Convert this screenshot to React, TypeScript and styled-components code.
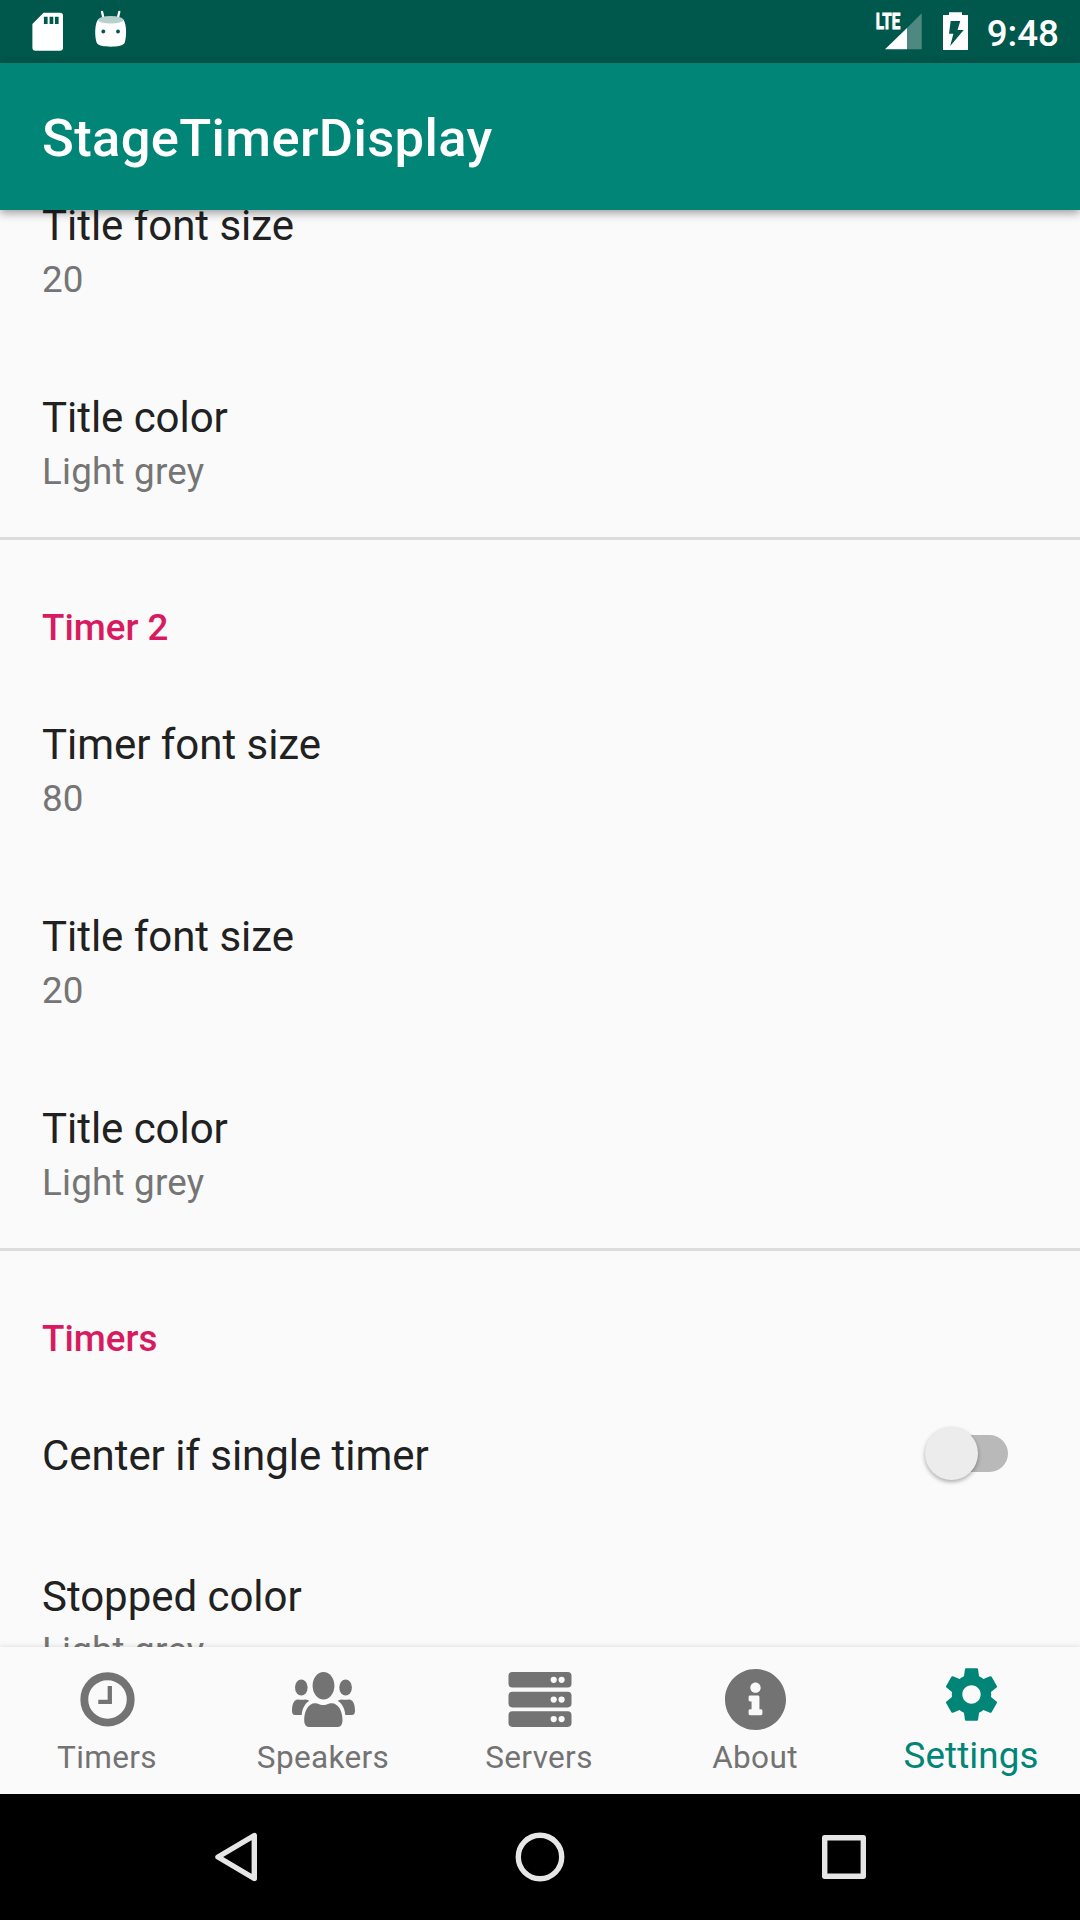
import React from "react";
import styled, { createGlobalStyle } from "styled-components";
import { FaInfoCircle } from "react-icons/fa";

const teal = "#008577";

const GlobalStyle = createGlobalStyle`
  html, body { margin: 0; padding: 0; }
  body { background: #fafafa; font-family: Roboto, "Noto Sans", sans-serif; overflow: hidden; }
  *, *::before, *::after { box-sizing: border-box; }
`;

const Screen = styled.div`
  width: 1080px;
  height: 1920px;
  display: flex;
  flex-direction: column;
  background: #fafafa;
  overflow: hidden;
`;

const StatusBar = styled.header`
  height: 63px;
  flex: none;
  display: flex;
  justify-content: space-between;
  padding: 0 21px 0 28px;
  background: #00574b;
  color: #fff;
`;

const StatusGroup = styled.div`
  display: flex;
  gap: 20px;
`;

const Clock = styled.time`
  font-size: 36.75px;
  font-weight: 500;
  line-height: 43px;
  padding-top: 12px;
  margin-left: -1px;
`;

const AppBar = styled.div`
  height: 147px;
  flex: none;
  display: flex;
  align-items: center;
  padding: 3px 42px 0;
  background: ${teal};
  color: #fff;
  box-shadow: 0 3px 9px rgba(0, 0, 0, 0.38);
  z-index: 2;
`;

const AppTitle = styled.h1`
  margin: 0;
  font-size: 52.5px;
  line-height: 62px;
  font-weight: 500;
  letter-spacing: 0.36px;
`;

const Preferences = styled.main`
  flex: 1;
  min-height: 0;
  display: flex;
  flex-direction: column;
  justify-content: flex-start;
  overflow: hidden;
`;

const Scrolled = styled.div`
  margin-top: -57px;
  display: flex;
  flex-direction: column;
`;

const Group = styled.section`
  display: flex;
  flex-direction: column;
  & + & {
    border-top: 3px solid #dcdcdc;
  }
`;

const GroupTitle = styled.h2`
  margin: 0;
  height: 132px;
  padding: 66px 42px 0;
  font-size: 36.75px;
  line-height: 43px;
  font-weight: 500;
  color: #d81b60;
`;

const Row = styled.div<{ $single?: boolean }>`
  height: ${(p) => (p.$single ? 141 : 192)}px;
  display: flex;
  justify-content: space-between;
  padding: 48px 72px 0 42px;
`;

const RowText = styled.div`
  display: flex;
  flex-direction: column;
  gap: 8px;
`;

const RowTitle = styled.span`
  font-size: 42px;
  line-height: 49px;
  letter-spacing: -0.04px;
  color: #212121;
`;

const Summary = styled.span`
  font-size: 36.75px;
  line-height: 43px;
  letter-spacing: 0.22px;
  color: #757575;
`;

const Track = styled.div`
  width: 80px;
  height: 37px;
  margin-top: 4px;
  border-radius: 19px;
  background: #b9b9b9;
  display: flex;
  align-items: center;
`;

const Thumb = styled.div`
  width: 53px;
  height: 53px;
  flex: none;
  margin-left: -3px;
  border-radius: 50%;
  background: #ececec;
  box-shadow: 0 2px 4px rgba(0, 0, 0, 0.32);
`;

const Tabs = styled.nav`
  height: 147px;
  flex: none;
  display: grid;
  grid-template-columns: repeat(5, 216px);
  background: #fafafa;
  box-shadow: 0 0 6px rgba(0, 0, 0, 0.14);
  z-index: 1;
`;

const Tab = styled.div<{ $active?: boolean }>`
  display: flex;
  flex-direction: column;
  align-items: center;
  justify-content: space-between;
  padding: ${(p) => (p.$active ? "16px 2px 17px 0" : "21px 2px 18px 0")};
  color: ${(p) => (p.$active ? teal : "#737373")};
  font-size: ${(p) => (p.$active ? 36.75 : 31.5)}px;
  line-height: ${(p) => (p.$active ? 43 : 37)}px;
  letter-spacing: ${(p) => (p.$active ? 0.1 : 0.35)}px;
  svg {
    display: block;
    flex: none;
    overflow: visible;
  }
`;

const SystemBar = styled.footer`
  height: 126px;
  flex: none;
  display: flex;
  justify-content: center;
  align-items: center;
  gap: 240px;
  background: #000;
`;

const SdIcon = () => (
  <svg width="42" height="63" viewBox="28 0 42 63">
    <path fill="#fff" d="M43.500 12.700H60a3 3 0 0 1 3 3v32a3 3 0 0 1-3 3H35.400a3 3 0 0 1-3-3V24z" />
    <path fill="#00574b" d="M43.900 16.700h3.700V24h-3.700zM49.600 16.700h3.700V24h-3.700zM54.900 16.700h3.700V24h-3.700z" />
  </svg>
);

const DroidIcon = () => (
  <svg width="42" height="63" viewBox="90 0 42 63">
    <path stroke="#fff" strokeWidth="2.300" strokeLinecap="round" d="M102 11.800l1.500 6.500M119.300 11.800l-1.500 6.500" />
    <path fill="#fff" d="M98 19.500c-3.300 4-3.600 17-1.200 23.500 1.500 4.900 26.200 4.900 27.800 0 2.300-6.500 2-19.500-1.200-23.500z" />
    <ellipse cx="110.700" cy="19.800" rx="12.700" ry="3.700" fill="#b8d0cc" />
    <circle cx="103.300" cy="31.500" r="1.900" fill="#00574b" />
    <circle cx="118" cy="31.500" r="1.900" fill="#00574b" />
  </svg>
);

const SignalIcon = () => (
  <svg width="48" height="63" viewBox="875 0 48 63">
    <path fill="#fff" fillOpacity="0.3" d="M907 28l14.700-14.700V49.300H907z" />
    <path fill="#fff" d="M885 49.300L907 28v21.300z" />
    <text
      x="875.800"
      y="29.300"
      fontSize="22.500"
      fontWeight="700"
      fill="#fff"
      stroke="#fff"
      strokeWidth="0.900"
      textLength="24.500"
      lengthAdjust="spacingAndGlyphs"
    >
      LTE
    </text>
  </svg>
);

const BatteryIcon = () => (
  <svg width="25" height="63" viewBox="943 0 25 63">
    <path
      fill="#fff"
      fillRule="evenodd"
      d="M949 12.300h13v2.700h6v35h-25V15h6zM950.700 21h9.600l-2.800 9h6.200L950.200 46l3.200-12.300h-4.400z"
    />
  </svg>
);

const TimerIcon = () => (
  <svg width="63" height="63" viewBox="0 0 63 63" fill="none" stroke="currentColor">
    <circle cx="31.500" cy="31.400" r="23.200" strokeWidth="7.900" />
    <path d="M33.800 18v15.900H22.300" strokeWidth="4.300" />
  </svg>
);

const SpeakersIcon = () => (
  <svg width="63" height="63" viewBox="-0.500 0 63 63" fill="currentColor">
    <ellipse cx="31" cy="17.700" rx="10.900" ry="13.700" />
    <ellipse cx="8.800" cy="19.500" rx="6.300" ry="8" />
    <ellipse cx="53.100" cy="19.500" rx="6.300" ry="8" />
    <path d="M22.500 35.300c3.200 0 4.200 1.700 8.300 1.700s5.200-1.700 8.400-1.700c6.600 0 10.800 8 10.800 16.700 0 4-1.500 6.900-4.500 6.900H16.200c-3.200 0-4.500-3.200-4.500-6.900 0-8.700 4.200-16.700 10.800-16.700z" />
    <path d="M5.500 31.400c2.500.5 5 .5 7.500 0 1.500.1 2.800.6 3.800 1.400-4.600 3-7.100 8-7.600 14.200H2.700c-2.200 0-3.200-1.500-3.200-4.300 0-6 1.700-11.300 6-11.300z" />
    <path d="M56.500 31.400c-2.500.5-5 .5-7.500 0-1.500.1-2.800.6-3.800 1.400 4.600 3 7.100 8 7.600 14.200h6.500c2.200 0 3.200-1.500 3.200-4.300 0-6-1.700-11.300-6-11.300z" />
  </svg>
);

const ServersIcon = () => (
  <svg width="63" height="63" viewBox="0 0 63 63" fill="currentColor">
    {[4, 23.800, 43.300].map((y) => (
      <g key={y}>
        <rect x="0.500" y={y} width="63" height="15.600" rx="3.800" />
        <circle cx="45.700" cy={y + 7.800} r="3.100" fill="#fafafa" />
        <circle cx="53.600" cy={y + 7.800} r="3.100" fill="#fafafa" />
      </g>
    ))}
  </svg>
);

const SettingsIcon = () => (
  <svg width="63" height="63" viewBox="0 0 24 24" fill="currentColor">
    <path d="M19.430 12.980c.04-.32.07-.64.07-.98s-.03-.66-.07-.98l2.110-1.650c.19-.15.24-.42.12-.64l-2-3.460c-.12-.22-.39-.3-.61-.22l-2.490 1c-.52-.4-1.080-.73-1.690-.98l-.38-2.650C14.460 2.180 14.250 2 14 2h-4c-.25 0-.46.18-.49.42l-.38 2.650c-.61.25-1.170.59-1.690.98l-2.490-1c-.23-.09-.49 0-.61.22l-2 3.460c-.13.22-.07.49.12.64l2.110 1.650c-.04.32-.07.65-.07.98s.03.66.07.98l-2.110 1.650c-.19.15-.24.42-.12.64l2 3.460c.12.22.39.3.61.22l2.490-1c.52.4 1.080.73 1.690.98l.38 2.650c.03.24.24.42.49.42h4c.25 0 .46-.18.49-.42l.38-2.650c.61-.25 1.170-.59 1.690-.98l2.490 1c.23.09.49 0 .61-.22l2-3.460c.12-.22.07-.49-.12-.64l-2.110-1.650zM12 15.500c-1.930 0-3.500-1.570-3.500-3.500s1.570-3.500 3.500-3.500 3.500 1.570 3.500 3.500-1.570 3.500-3.500 3.500z" />
  </svg>
);

const NavIcon = ({ children }: { children: React.ReactNode }) => (
  <svg width="64" height="64" viewBox="0 0 64 64" fill="none" stroke="#e6e6e6" strokeWidth="5.400" strokeLinejoin="round">
    {children}
  </svg>
);

const Preference = ({ title, summary }: { title: string; summary: string }) => (
  <Row>
    <RowText>
      <RowTitle>{title}</RowTitle>
      <Summary>{summary}</Summary>
    </RowText>
  </Row>
);

export default function App() {
  return (
    <Screen>
      <GlobalStyle />
      <StatusBar>
        <StatusGroup>
          <SdIcon />
          <DroidIcon />
        </StatusGroup>
        <StatusGroup>
          <SignalIcon />
          <BatteryIcon />
          <Clock>9:48</Clock>
        </StatusGroup>
      </StatusBar>
      <AppBar>
        <AppTitle>StageTimerDisplay</AppTitle>
      </AppBar>
      <Preferences>
        <Scrolled>
          <Group>
            <Preference title="Title font size" summary="20" />
            <Preference title="Title color" summary="Light grey" />
          </Group>
          <Group>
            <GroupTitle>Timer 2</GroupTitle>
            <Preference title="Timer font size" summary="80" />
            <Preference title="Title font size" summary="20" />
            <Preference title="Title color" summary="Light grey" />
          </Group>
          <Group>
            <GroupTitle>Timers</GroupTitle>
            <Row $single>
              <RowTitle>Center if single timer</RowTitle>
              <Track>
                <Thumb />
              </Track>
            </Row>
            <Preference title="Stopped color" summary="Light grey" />
          </Group>
        </Scrolled>
      </Preferences>
      <Tabs>
        <Tab>
          <TimerIcon />
          Timers
        </Tab>
        <Tab>
          <SpeakersIcon />
          Speakers
        </Tab>
        <Tab>
          <ServersIcon />
          Servers
        </Tab>
        <Tab>
          <FaInfoCircle size={63} />
          About
        </Tab>
        <Tab $active>
          <SettingsIcon />
          Settings
        </Tab>
      </Tabs>
      <SystemBar>
        <NavIcon>
          <path d="M50.300 10.500v43L14 32z" />
        </NavIcon>
        <NavIcon>
          <circle cx="32" cy="32" r="21.700" />
        </NavIcon>
        <NavIcon>
          <rect x="12.700" y="12.700" width="38.600" height="38.600" />
        </NavIcon>
      </SystemBar>
    </Screen>
  );
}
